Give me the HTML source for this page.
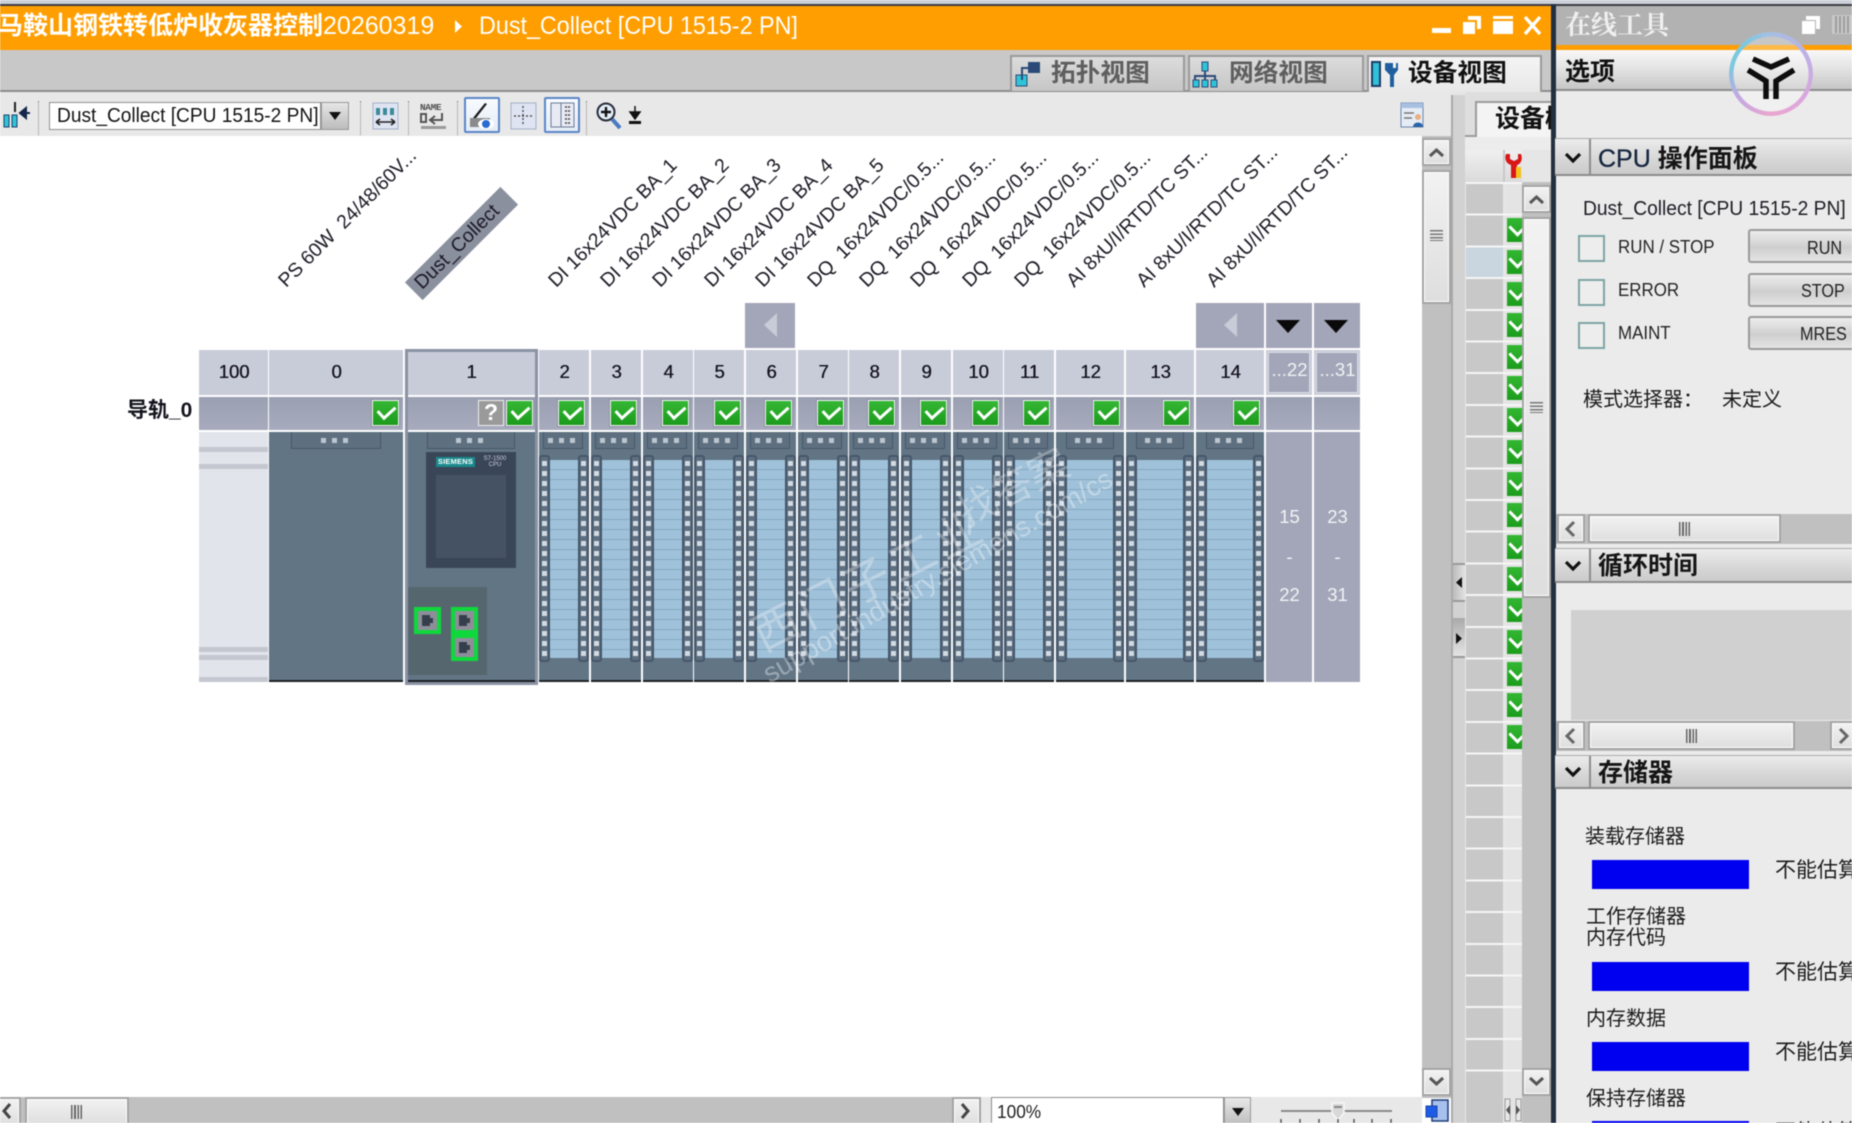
<!DOCTYPE html>
<html lang="zh"><head><meta charset="utf-8"><title>Dust_Collect</title>
<style>
*{box-sizing:border-box}
html,body{margin:0;padding:0;width:1852px;height:1123px;overflow:hidden;background:#fff}
#p{position:relative;width:1852px;height:1123px;overflow:hidden;background:#fff;filter:blur(.6px);font-family:"Liberation Sans","Noto Sans CJK SC",sans-serif;color:#111}
#p div,#p svg,#p span.a{position:absolute}
.z{white-space:pre;line-height:1}
.sx{transform-origin:0 50%;transform:scaleX(.933)}
.tb{height:36px;top:55px;background:linear-gradient(#dcdcdc,#c6c6c6);border:2px solid #9a9a9a;border-bottom:none}
.tt{font-size:24.7px;font-weight:700;top:61px;line-height:26px;white-space:pre}
.h{left:1555px;width:297px;background:linear-gradient(#ececec,#d6d6d6 60%,#cbcbcb);border-top:1px solid #aaa;border-bottom:2px solid #8c8c8c}
.h i{position:absolute;left:34px;top:0;bottom:-2px;width:2px;background:#8c8c8c}
.ht{left:1598px;font-size:25px;font-weight:700;line-height:28px;white-space:pre;color:#151515}
.sb{background:linear-gradient(#f2f2f2,#dedede);border:2px solid #a4a4a4;box-shadow:inset 0 0 0 1px #fff}
.tr{background:#c0c0c0}
.hd{top:350px;height:45px;background:#c8ccd9;text-align:center;font-size:18.5px;line-height:44px;color:#14141e;padding-left:1px;text-shadow:.4px 0 #14141e}
.ck{top:397px;height:33px;background:linear-gradient(#9b9fb2,#a7abbd)}
.c{top:400px;width:27px;height:26px;margin-left:-1px;background:linear-gradient(#35b835,#1c9a1c);border:1.5px solid #f2f4f4;box-shadow:0 0 0 1px #8c90a2}
.c::after{content:"";position:absolute;left:8px;top:1px;width:8px;height:14px;border:solid #fff;border-width:0 3.5px 3.5px 0;transform:rotate(48deg)}
.g{left:1507px;width:15px;height:24px;background:linear-gradient(#33b833,#1c9c1c);overflow:hidden}
.g::after{content:"";position:absolute;left:4px;top:3px;width:10px;height:10px;border:solid #fff;border-width:0 3.5px 3.5px 0;transform:rotate(45deg)}
.m{top:432px;height:250px;background:#627585;overflow:hidden}
.m::after{content:"";position:absolute;left:0;right:0;bottom:0;height:2px;background:#1c2024}
.t{top:-1px;height:18px;background:#5e7080;border:1px solid #46576a}
.t::before{content:"";position:absolute;left:50%;margin-left:-15px;top:6px;width:5px;height:5px;background:#bcc6d0;box-shadow:11px 0 #bcc6d0,22px 0 #bcc6d0}
.pn{top:28px;height:198px;background:repeating-linear-gradient(#9fc1d9 0 9px,#86a9c2 9px 10px);background-color:#9fc1d9}
.st{top:23px;width:11px;height:207px;border-radius:3px;border:2px solid #46576a;background:repeating-linear-gradient(#0000 0 4px,#d2dae2 4px 9px,#0000 9px 10px) center/5px 100% no-repeat #5d6f80}
.la{left:0}.ra{right:0}
.n{top:0;height:20px;line-height:20px;font-size:19.5px;white-space:pre;transform-origin:0 100%;transform:rotate(-45deg);color:#1a1a24}
.ex{width:46px;background:#a2a6b8}
.w{color:#f2f3f6;font-size:18.5px;line-height:20px;text-align:center;padding-left:1px}
.lb{font-size:18px;line-height:20px;white-space:pre;color:#232323;transform-origin:0 50%;transform:scaleX(.94)}
.cb{left:1578px;width:27px;height:27px;border:2px solid #7ea4a6;background:#ededed}
.bt{left:1748px;width:130px;height:34px;border:2px solid #999;border-radius:3px;background:linear-gradient(#ededed,#cfcfcf 55%,#e4e4e4)}
.bl{font-size:18px;line-height:22px;color:#222;white-space:pre;transform-origin:0 50%;transform:scaleX(.9)}
.tx{font-family:"WenQuanYi Zen Hei","Noto Sans CJK SC",sans-serif;font-size:20px;line-height:22px;white-space:pre;color:#1c1c1c}
.bb{left:1592px;width:157px;height:29px;background:#0000f0}
</style></head><body><div id="p">

<!-- top strip -->
<div style="left:0;top:0;width:1852px;height:4px;background:#ccd0d8"></div>
<div style="left:0;top:4px;width:1852px;height:2px;background:#3c3c44"></div>

<!-- title bar -->
<div style="left:0;top:6px;width:1552px;height:44px;background:#ff9e00"></div>
<div class="z" style="left:-2px;top:11px;line-height:30px;font-size:25px;color:#fff;font-weight:700">马鞍山钢铁转低炉收灰器控制<span style="font-weight:400">20260319</span></div>
<svg style="left:454px;top:20px" width="9" height="13"><path d="M1 0L8 6.5L1 13Z" fill="#fff"/></svg>
<div class="z sx" style="left:479px;top:11px;line-height:30px;font-size:25px;color:#fff">Dust_Collect [CPU 1515-2 PN]</div>
<svg style="left:1430px;top:14px" width="116" height="22" viewBox="0 0 116 22" fill="#fff"><rect x="2" y="14" width="19" height="5"/><path d="M38 2h13v13h-4V6h-9z"/><rect x="33" y="8" width="12" height="12"/><rect x="63" y="2" width="20" height="18"/><rect x="63" y="5" width="20" height="2" fill="#ff9e00"/><path d="M95 3L110 20M110 3L95 20" stroke="#fff" stroke-width="3.4" fill="none"/></svg>

<!-- tabs band -->
<div style="left:0;top:50px;width:1552px;height:41px;background:#c8c8c8"></div>
<div style="left:0;top:90px;width:1552px;height:2px;background:#8c8c8c"></div>
<div class="tb" style="left:1010px;width:175px"></div>
<div class="tb" style="left:1188px;width:176px"></div>
<div class="tb" style="left:1367px;width:175px;height:38px;background:linear-gradient(#f4f4f4,#e8e8e8)"></div>
<svg style="left:1014px;top:60px" width="28" height="28" viewBox="0 0 28 28"><rect x="14" y="2" width="12" height="11" fill="#2c4a78"/><rect x="2" y="15" width="11" height="11" fill="#2fc4d8" stroke="#2c4a78"/><path d="M14 8H8V20" stroke="#2c4a78" stroke-width="2" fill="none"/></svg>
<div class="tt" style="left:1051px;color:#5e5e5e">拓扑视图</div>
<svg style="left:1192px;top:60px" width="26" height="28" viewBox="0 0 26 28"><rect x="10" y="2" width="6" height="9" fill="#2fc4d8" stroke="#2c4a78"/><path d="M13 11v5M3 22v-6h20v6M13 16v6" stroke="#2c4a78" stroke-width="2" fill="none"/><rect x="1" y="20" width="6" height="7" fill="#2fc4d8" stroke="#2c4a78"/><rect x="10" y="20" width="6" height="7" fill="#2fc4d8" stroke="#2c4a78"/><rect x="19" y="20" width="6" height="7" fill="#2fc4d8" stroke="#2c4a78"/></svg>
<div class="tt" style="left:1229px;color:#5e5e5e">网络视图</div>
<svg style="left:1371px;top:60px" width="28" height="28" viewBox="0 0 28 28"><rect x="1" y="2" width="8" height="24" fill="#30c0d8" stroke="#1c3c68" stroke-width="2"/><path d="M14 3v7l5 5v12h4V15l4-5V3l-2 0v5h-3V3z" fill="#1f5fa0"/></svg>
<div class="tt" style="left:1408px;color:#111">设备视图</div>

<!-- toolbar -->
<div style="left:0;top:92px;width:1451px;height:44px;background:#e8e8e8"></div>
<svg style="left:2px;top:100px" width="30" height="30" viewBox="0 0 30 30"><path d="M13 2v10" stroke="#222" stroke-width="2"/><rect x="2" y="15" width="5" height="12" fill="#2fc4d8" stroke="#1c3c68"/><rect x="10" y="15" width="5" height="12" fill="#2fc4d8" stroke="#1c3c68"/><path d="M28 13H19M24 8l-6 5 6 5z" fill="#14264a" stroke="#14264a" stroke-width="2"/></svg>
<div style="left:38px;top:101px;width:1px;height:34px;border-left:1px dotted #888"></div>
<div style="left:49px;top:102px;width:272px;height:28px;background:#fff;border:1.5px solid #909090"></div>
<div class="z sx" style="left:57px;top:104px;font-size:20.5px;line-height:24px;color:#141414">Dust_Collect [CPU 1515-2 PN]</div>
<div style="left:321px;top:102px;width:28px;height:28px;background:linear-gradient(#e6e6e6,#bcbcbc);border:1.5px solid #999"></div>
<svg style="left:329px;top:112px" width="12" height="8"><path d="M0 0H12L6 8Z" fill="#111"/></svg>
<div style="left:360px;top:101px;height:34px;border-left:1px dotted #888"></div>
<div style="left:408px;top:101px;height:34px;border-left:1px dotted #888"></div>
<div style="left:457px;top:101px;height:34px;border-left:1px dotted #888"></div>
<div style="left:586px;top:101px;height:34px;border-left:1px dotted #888"></div>
<svg style="left:372px;top:102px" width="27" height="28" viewBox="0 0 27 28"><rect x="1" y="1" width="25" height="26" fill="#dfe4f2" stroke="#a4aec8"/><path d="M6 6v7M13 6v7M20 6v7" stroke="#3a8a9a" stroke-width="4"/><path d="M4 20H23M4 20l4-3M4 20l4 3M23 20l-4-3M23 20l-4 3" stroke="#222" stroke-width="1.6" fill="none"/></svg>
<div style="left:420px;top:102px;font:700 9.5px/11px 'Liberation Mono',monospace;color:#4e4e4e;letter-spacing:-.4px">NAME</div>
<svg style="left:420px;top:112px" width="27" height="18" viewBox="0 0 27 18"><path d="M1 2h5v8H1zM22 1v7H11M15 4l-5 4 5 4" stroke="#555" stroke-width="2" fill="none"/><rect x="1" y="14" width="25" height="3" fill="#9a9a9a"/></svg>
<div style="left:464px;top:97px;width:36px;height:36px;background:linear-gradient(#f8fbff,#e4ecf6);border:2px solid #5a86c8;border-radius:2px"></div>
<svg style="left:468px;top:100px" width="28" height="31" viewBox="0 0 28 31"><path d="M5 18L17 3l2 1L8 18z" fill="#1a1a1a"/><rect x="2" y="18" width="20" height="9" fill="#8a8a8a"/><ellipse cx="18" cy="24" rx="8" ry="5" fill="#fff"/><circle cx="18" cy="24" r="4" fill="#2a6ad0"/></svg>
<svg style="left:510px;top:102px" width="27" height="28" viewBox="0 0 27 28"><rect x="1" y="1" width="25" height="26" fill="#dfe4f2" stroke="#a4aec8"/><path d="M13 4v20M4 14h19" stroke="#333" stroke-width="1.2" stroke-dasharray="2 2"/></svg>
<div style="left:544px;top:97px;width:36px;height:36px;background:linear-gradient(#f8fbff,#e4ecf6);border:2px solid #5a86c8;border-radius:2px"></div>
<svg style="left:550px;top:102px" width="25" height="26" viewBox="0 0 25 26"><rect x="1" y="1" width="23" height="24" fill="#e8eaf4" stroke="#6a7a94"/><path d="M11 1v24" stroke="#6a7a94"/><path d="M15 5h6M15 9h6M15 13h6M15 17h6M15 21h6" stroke="#444" stroke-width="1.6" stroke-dasharray="2 1"/></svg>
<svg style="left:596px;top:102px" width="26" height="28" viewBox="0 0 26 28"><circle cx="10" cy="10" r="8.5" fill="#e4eef8" stroke="#2a2a3a" stroke-width="2"/><path d="M5 10h10M10 5v10" stroke="#111" stroke-width="2.4"/><path d="M16 17l8 9" stroke="#4a7ac0" stroke-width="4"/></svg>
<svg style="left:628px;top:106px" width="14" height="20" viewBox="0 0 14 20"><path d="M7 0v9M2 6h10L7 13z" fill="#111" stroke="#111" stroke-width="1.5"/><rect x="1" y="15" width="12" height="3" fill="#111"/></svg>
<svg style="left:1400px;top:102px" width="26" height="26" viewBox="0 0 26 26"><rect x="1" y="1" width="22" height="24" fill="#e6ecf6" stroke="#6a86b0"/><rect x="1" y="1" width="22" height="5" fill="#a8c0e0"/><path d="M4 11h10M4 16h8" stroke="#777" stroke-width="1.5"/><circle cx="18" cy="15" r="3" fill="#e8b080"/><path d="M13 25c0-6 10-6 10 0z" fill="#2a64a8"/></svg>

<!-- labels -->
<div class="n" style="left:289px;top:271px">PS 60W  24/48/60V...</div>
<div style="left:394px;top:231px;width:135px;height:25px;background:#8b909f;transform:rotate(-45deg)"></div>
<div class="n" style="left:425px;top:273px">Dust_Collect</div>
<div class="n" style="left:559px;top:271px">DI 16x24VDC BA_1</div>
<div class="n" style="left:611px;top:271px">DI 16x24VDC BA_2</div>
<div class="n" style="left:663px;top:271px">DI 16x24VDC BA_3</div>
<div class="n" style="left:715px;top:271px">DI 16x24VDC BA_4</div>
<div class="n" style="left:766px;top:271px">DI 16x24VDC BA_5</div>
<div class="n" style="left:818px;top:271px">DQ  16x24VDC/0.5...</div>
<div class="n" style="left:870px;top:271px">DQ  16x24VDC/0.5...</div>
<div class="n" style="left:921px;top:271px">DQ  16x24VDC/0.5...</div>
<div class="n" style="left:973px;top:271px">DQ  16x24VDC/0.5...</div>
<div class="n" style="left:1025px;top:271px">DQ  16x24VDC/0.5...</div>
<div class="n" style="left:1077px;top:271px">AI 8xU/I/RTD/TC ST...</div>
<div class="n" style="left:1147px;top:271px">AI 8xU/I/RTD/TC ST...</div>
<div class="n" style="left:1217px;top:271px">AI 8xU/I/RTD/TC ST...</div>

<!-- nav arrow cells -->
<div style="left:745px;top:303px;width:50px;height:45px;background:#a2a6b8"></div>
<svg style="left:764px;top:313px" width="13" height="24"><path d="M13 0V24L0 12Z" fill="#c8ccd8"/></svg>
<div style="left:1196px;top:303px;width:68px;height:45px;background:#a2a6b8"></div>
<svg style="left:1224px;top:313px" width="13" height="24"><path d="M13 0V24L0 12Z" fill="#c8ccd8"/></svg>
<div style="left:1266px;top:303px;width:46px;height:45px;background:#a2a6b8"></div>
<div style="left:1314px;top:303px;width:46px;height:45px;background:#a2a6b8"></div>
<svg style="left:1276px;top:320px" width="24" height="13"><path d="M0 0H24L12 13Z" fill="#0a0a0a"/></svg>
<svg style="left:1324px;top:320px" width="24" height="13"><path d="M0 0H24L12 13Z" fill="#0a0a0a"/></svg>

<div class="z" style="left:127px;top:399px;font-size:21px;line-height:24px;font-weight:700;color:#14141e">导轨_0</div>

<!-- slot headers -->
<div class="hd" style="left:199px;width:69px">100</div>
<div class="hd" style="left:269px;width:134px">0</div>
<div class="hd" style="left:407px;width:128px">1</div>
<div class="hd" style="left:539px;width:50px">2</div>
<div class="hd" style="left:591px;width:50px">3</div>
<div class="hd" style="left:643px;width:50px">4</div>
<div class="hd" style="left:694px;width:50px">5</div>
<div class="hd" style="left:746px;width:50px">6</div>
<div class="hd" style="left:798px;width:50px">7</div>
<div class="hd" style="left:849px;width:50px">8</div>
<div class="hd" style="left:901px;width:50px">9</div>
<div class="hd" style="left:953px;width:50px">10</div>
<div class="hd" style="left:1004px;width:50px">11</div>
<div class="hd" style="left:1056px;width:68px">12</div>
<div class="hd" style="left:1126px;width:68px">13</div>
<div class="hd" style="left:1196px;width:68px">14</div>
<div style="left:1266px;top:350px;width:46px;height:45px;background:#c8ccd9"></div>
<div style="left:1268px;top:352px;width:42px;height:41px;background:#a2a6b8;border:1px solid #d8dae2"></div>
<div class="w" style="left:1268px;top:360px;width:42px">...22</div>
<div style="left:1314px;top:350px;width:46px;height:45px;background:#c8ccd9"></div>
<div style="left:1316px;top:352px;width:42px;height:41px;background:#a2a6b8;border:1px solid #d8dae2"></div>
<div class="w" style="left:1316px;top:360px;width:42px">...31</div>

<!-- check row -->
<div class="ck" style="left:199px;width:69px"></div>
<div class="ck" style="left:269px;width:134px"></div>
<div class="ck" style="left:407px;width:128px"></div>
<div class="ck" style="left:539px;width:50px"></div>
<div class="ck" style="left:591px;width:50px"></div>
<div class="ck" style="left:643px;width:50px"></div>
<div class="ck" style="left:694px;width:50px"></div>
<div class="ck" style="left:746px;width:50px"></div>
<div class="ck" style="left:798px;width:50px"></div>
<div class="ck" style="left:849px;width:50px"></div>
<div class="ck" style="left:901px;width:50px"></div>
<div class="ck" style="left:953px;width:50px"></div>
<div class="ck" style="left:1004px;width:50px"></div>
<div class="ck" style="left:1056px;width:68px"></div>
<div class="ck" style="left:1126px;width:68px"></div>
<div class="ck" style="left:1196px;width:68px"></div>
<div class="ck" style="left:1266px;width:46px"></div>
<div class="ck" style="left:1314px;width:46px"></div>
<div class="c" style="left:373px"></div>
<div style="left:478px;top:400px;width:26px;height:26px;background:#9a9a9a;border:1.5px solid #eee;color:#fff;font:700 23px/23px 'Liberation Sans',sans-serif;text-align:center">?</div>
<div class="c" style="left:507px"></div>
<div class="c" style="left:559px"></div>
<div class="c" style="left:611px"></div>
<div class="c" style="left:663px"></div>
<div class="c" style="left:715px"></div>
<div class="c" style="left:766px"></div>
<div class="c" style="left:818px"></div>
<div class="c" style="left:869px"></div>
<div class="c" style="left:921px"></div>
<div class="c" style="left:973px"></div>
<div class="c" style="left:1024px"></div>
<div class="c" style="left:1094px"></div>
<div class="c" style="left:1164px"></div>
<div class="c" style="left:1234px"></div>

<!-- rail: slot 100 -->
<div style="left:199px;top:432px;width:69px;height:250px;background:#e2e4ec"></div>
<div style="left:199px;top:447px;width:69px;height:5px;background:#c4c6d0"></div>
<div style="left:199px;top:464px;width:69px;height:5px;background:#c4c6d0"></div>
<div style="left:199px;top:647px;width:69px;height:5px;background:#c4c6d0"></div>
<div style="left:199px;top:655px;width:69px;height:5px;background:#c4c6d0"></div>
<div style="left:199px;top:677px;width:69px;height:5px;background:#c4c6d0"></div>

<!-- slot 0 -->
<div class="m" style="left:269px;width:134px"><div class="t" style="left:22px;width:90px"></div></div>

<!-- slot 1 CPU -->
<div class="m" style="left:407px;width:128px">
 <div class="t" style="left:20px;width:88px"></div>
 <div style="left:19px;top:20px;width:90px;height:116px;background:#394658"></div>
 <div style="left:29px;top:43px;width:70px;height:83px;background:#445264"></div>
 <div style="left:29px;top:25px;width:39px;height:10px;background:#1a8a8c;color:#fff;font:700 7.5px/10px 'Liberation Sans',sans-serif;text-align:center;letter-spacing:.2px">SIEMENS</div>
 <div style="left:76px;top:24px;width:24px;color:#ccd;font:6px/6px 'Liberation Sans',sans-serif;text-align:center">S7-1500<br>CPU</div>
 <div style="left:1px;top:155px;width:79px;height:88px;background:#56666f"></div>
 <div style="left:7px;top:175px;width:27px;height:27px;background:#0fd83c"></div>
 <div style="left:44px;top:175px;width:27px;height:54px;background:#0fd83c"></div>
 <svg style="left:7px;top:175px" width="64" height="54" viewBox="0 0 64 54"><rect x="4" y="4" width="19" height="19" fill="#8e8e9a"/><rect x="41" y="4" width="19" height="19" fill="#8e8e9a"/><rect x="41" y="31" width="19" height="19" fill="#8e8e9a"/><path d="M8 8h8v3h3v5h-3v3H8zM45 8h8v3h3v5h-3v3h-8zM45 35h8v3h3v5h-3v3h-8z" fill="#353f4c"/></svg>
</div>

<!-- IO modules -->
<div class="m" style="left:539px;width:50px"><div class="t" style="left:4px;right:6px"></div><div class="pn" style="left:11px;right:11px"></div><div class="st la"></div><div class="st ra"></div></div>
<div class="m" style="left:591px;width:50px"><div class="t" style="left:4px;right:6px"></div><div class="pn" style="left:11px;right:11px"></div><div class="st la"></div><div class="st ra"></div></div>
<div class="m" style="left:643px;width:50px"><div class="t" style="left:4px;right:6px"></div><div class="pn" style="left:11px;right:11px"></div><div class="st la"></div><div class="st ra"></div></div>
<div class="m" style="left:694px;width:50px"><div class="t" style="left:4px;right:6px"></div><div class="pn" style="left:11px;right:11px"></div><div class="st la"></div><div class="st ra"></div></div>
<div class="m" style="left:746px;width:50px"><div class="t" style="left:4px;right:6px"></div><div class="pn" style="left:11px;right:11px"></div><div class="st la"></div><div class="st ra"></div></div>
<div class="m" style="left:798px;width:50px"><div class="t" style="left:4px;right:6px"></div><div class="pn" style="left:11px;right:11px"></div><div class="st la"></div><div class="st ra"></div></div>
<div class="m" style="left:849px;width:50px"><div class="t" style="left:4px;right:6px"></div><div class="pn" style="left:11px;right:11px"></div><div class="st la"></div><div class="st ra"></div></div>
<div class="m" style="left:901px;width:50px"><div class="t" style="left:4px;right:6px"></div><div class="pn" style="left:11px;right:11px"></div><div class="st la"></div><div class="st ra"></div></div>
<div class="m" style="left:953px;width:50px"><div class="t" style="left:4px;right:6px"></div><div class="pn" style="left:11px;right:11px"></div><div class="st la"></div><div class="st ra"></div></div>
<div class="m" style="left:1004px;width:50px"><div class="t" style="left:4px;right:6px"></div><div class="pn" style="left:11px;right:11px"></div><div class="st la"></div><div class="st ra"></div></div>
<div class="m" style="left:1056px;width:68px"><div class="t" style="left:10px;right:10px"></div><div class="pn" style="left:11px;right:11px"></div><div class="st la"></div><div class="st ra"></div></div>
<div class="m" style="left:1126px;width:68px"><div class="t" style="left:10px;right:10px"></div><div class="pn" style="left:11px;right:11px"></div><div class="st la"></div><div class="st ra"></div></div>
<div class="m" style="left:1196px;width:68px"><div class="t" style="left:10px;right:10px"></div><div class="pn" style="left:11px;right:11px"></div><div class="st la"></div><div class="st ra"></div></div>

<!-- extended -->
<div class="ex" style="left:1266px;top:432px;height:250px"></div>
<div class="ex" style="left:1314px;top:432px;height:250px"></div>
<div class="w" style="left:1266px;top:507px;width:46px">15</div>
<div class="w" style="left:1266px;top:547px;width:46px">-</div>
<div class="w" style="left:1266px;top:585px;width:46px">22</div>
<div class="w" style="left:1314px;top:507px;width:46px">23</div>
<div class="w" style="left:1314px;top:547px;width:46px">-</div>
<div class="w" style="left:1314px;top:585px;width:46px">31</div>

<!-- selection frame -->
<div style="left:405px;top:349px;width:133px;height:336px;border:3px solid #8a92a4"></div>

<!-- watermark -->
<div class="z" style="left:765px;top:610px;font-size:46px;letter-spacing:5px;color:rgba(255,255,255,.3);transform-origin:0 100%;transform:rotate(-27deg);font-family:'Noto Sans CJK SC',sans-serif;font-weight:400">西门子工业</div>
<div class="z" style="left:967px;top:490px;font-size:40px;color:rgba(255,255,255,.3);transform-origin:0 100%;transform:rotate(-27deg);font-family:'Noto Sans CJK SC',sans-serif;font-weight:400">找答案</div>
<div class="z" style="left:772px;top:660px;font-size:27.5px;color:rgba(255,255,255,.36);transform-origin:0 100%;transform:rotate(-30deg)">support.industry.siemens.com/cs</div>

<!-- main v scrollbar -->
<div class="tr" style="left:1422px;top:136px;width:29px;height:962px"></div>
<div class="sb" style="left:1422px;top:138px;width:29px;height:28px"></div>
<svg style="left:1428px;top:147px" width="17" height="11"><path d="M2 9L8.500 3L15 9" stroke="#555" stroke-width="3" fill="none"/></svg>
<div class="sb" style="left:1422px;top:170px;width:29px;height:134px"></div>
<div style="left:1430px;top:230px;width:13px;height:11px;background:repeating-linear-gradient(#777 0 1.5px,#0000 1.5px 3.4px)"></div>
<div class="sb" style="left:1422px;top:1068px;width:29px;height:28px"></div>
<svg style="left:1428px;top:1076px" width="17" height="11"><path d="M2 2L8.500 8L15 2" stroke="#555" stroke-width="3" fill="none"/></svg>

<!-- device overview column -->
<div style="left:1451px;top:92px;width:101px;height:1031px;background:#e6e6e6"></div>
<div style="left:1451px;top:95px;width:14px;height:1028px;background:#d2d2d2;border-left:2px solid #aaa"></div>
<div style="left:1465px;top:92px;width:87px;height:45px;background:#dedede"></div>
<div style="left:1475px;top:101px;width:77px;height:36px;background:#f4f4f4;border:2px solid #9c9c9c;border-right:none;border-bottom:none;overflow:hidden">
 <div class="z" style="left:18px;top:2px;font-size:25px;line-height:28px;font-weight:700;color:#111">设备概览</div>
</div>
<div style="left:1465px;top:135px;width:10px;height:2px;background:#9c9c9c"></div>
<div style="left:1465px;top:137px;width:87px;height:13px;background:#ececec"></div>
<div style="left:1465px;top:150px;width:57px;height:32px;background:linear-gradient(#f0f0f0,#dadada)"></div>
<div style="left:1503px;top:150px;width:2px;height:32px;background:#c8c8c8"></div>
<svg style="left:1505px;top:153px" width="17" height="26" viewBox="0 0 17 26"><path d="M1 1c-2 6 1 10 5 11v13h6V12c4-1 6-6 4-11l-3 0v5l-4 2-4-2V1z" fill="#d81818"/><rect x="11" y="14" width="5" height="11" fill="#f2c418"/></svg>
<div style="left:1466px;top:182px;width:37px;height:941px;background:#c8c8c8"></div>
<div style="left:1466px;top:246px;width:37px;height:31px;background:#c9d5df"></div>
<div style="left:1505px;top:182px;width:17px;height:941px;background:#e4e4e4"></div>
<div style="left:1466px;top:182px;width:56px;height:916px;background:repeating-linear-gradient(#f6f6f6 0 2px,#0000 2px 31.7px)"></div>

<div class="g" style="top:218px"></div><div class="g" style="top:250px"></div><div class="g" style="top:282px"></div><div class="g" style="top:313px"></div><div class="g" style="top:345px"></div><div class="g" style="top:376px"></div><div class="g" style="top:408px"></div><div class="g" style="top:440px"></div><div class="g" style="top:472px"></div><div class="g" style="top:503px"></div><div class="g" style="top:535px"></div><div class="g" style="top:567px"></div><div class="g" style="top:598px"></div><div class="g" style="top:630px"></div><div class="g" style="top:662px"></div><div class="g" style="top:693px"></div><div class="g" style="top:725px"></div>

<div class="tr" style="left:1522px;top:182px;width:30px;height:941px"></div>
<div class="sb" style="left:1522px;top:185px;width:29px;height:28px"></div>
<svg style="left:1528px;top:194px" width="17" height="11"><path d="M2 9L8.500 3L15 9" stroke="#555" stroke-width="3" fill="none"/></svg>
<div class="sb" style="left:1522px;top:217px;width:29px;height:381px"></div>
<div style="left:1530px;top:402px;width:13px;height:11px;background:repeating-linear-gradient(#777 0 1.5px,#0000 1.5px 3.4px)"></div>
<div class="sb" style="left:1522px;top:1068px;width:29px;height:28px"></div>
<svg style="left:1528px;top:1076px" width="17" height="11"><path d="M2 2L8.500 8L15 2" stroke="#555" stroke-width="3" fill="none"/></svg>

<!-- collapse arrows -->
<div style="left:1453px;top:563px;width:12px;height:39px;background:linear-gradient(90deg,#bbb,#e2e2e2);border-top:2px solid #999;border-bottom:2px solid #999"></div>
<svg style="left:1456px;top:577px" width="6" height="11"><path d="M6 0V11L0 5.500Z" fill="#111"/></svg>
<div style="left:1453px;top:618px;width:12px;height:40px;background:linear-gradient(#aaa,#e4e4e4);border-bottom:2px solid #999"></div>
<svg style="left:1456px;top:633px" width="6" height="11"><path d="M0 0V11L6 5.500Z" fill="#111"/></svg>

<!-- bottom bar -->
<div style="left:0;top:1097px;width:1422px;height:26px;background:#c0c0c0"></div>
<div class="sb" style="left:-8px;top:1097px;width:29px;height:30px"></div>
<svg style="left:1px;top:1102px" width="11" height="18"><path d="M9 2L3 9L9 16" stroke="#444" stroke-width="3" fill="none"/></svg>
<div class="sb" style="left:25px;top:1097px;width:104px;height:30px"></div>
<div style="left:71px;top:1105px;width:12px;height:14px;background:repeating-linear-gradient(90deg,#666 0 1.6px,#0000 1.6px 3.2px)"></div>
<div class="sb" style="left:952px;top:1097px;width:29px;height:30px"></div>
<svg style="left:960px;top:1102px" width="11" height="18"><path d="M2 2L8 9L2 16" stroke="#444" stroke-width="3" fill="none"/></svg>
<div style="left:981px;top:1097px;width:441px;height:26px;background:#e8e8e8"></div>
<div style="left:991px;top:1097px;width:233px;height:30px;background:#fff;border:1.5px solid #8c8c8c"></div>
<div class="z sx" style="left:997px;top:1101px;font-size:18.5px;line-height:22px;color:#222">100%</div>
<div style="left:1224px;top:1097px;width:27px;height:30px;background:linear-gradient(#e8e8e8,#bcbcbc);border:1.5px solid #999"></div>
<svg style="left:1232px;top:1108px" width="12" height="8"><path d="M0 0H12L6 8Z" fill="#111"/></svg>
<div style="left:1281px;top:1110px;width:111px;height:2px;background:#8a8a8a"></div>
<svg style="left:1331px;top:1102px" width="14" height="19"><path d="M1 1H13V11L7 18L1 11Z" fill="#d8d8d8" stroke="#f8f8f8" stroke-width="1.5"/><path d="M3 5H11" stroke="#888" stroke-width="2"/></svg>
<svg style="left:1280px;top:1119px" width="114" height="4"><path d="M1 0v4M20 0v4M39 0v4M58 0v4M74 0v4M92 0v4M111 0v4" stroke="#555" stroke-width="1.5"/></svg>
<svg style="left:1425px;top:1099px" width="24" height="23" viewBox="0 0 24 23"><rect x="7" y="1" width="16" height="21" fill="#a8c0ec" stroke="#1c3c78" stroke-width="1.5"/><rect x="1" y="7" width="11" height="11" fill="#1e5ce8" stroke="#1844a8"/></svg>
<svg style="left:1504px;top:1098px" width="18" height="25" viewBox="0 0 18 25"><path d="M1 1h5v22H1zM12 1h5v22h-5z" fill="#e8e8e8" stroke="#999"/><path d="M6 7l-4 5 4 5zM12 7l4 5-4 5z" fill="#555"/></svg>

<!-- separator -->
<div style="left:1551px;top:4px;width:5px;height:1119px;background:#22303f"></div>

<!-- right panel -->
<div style="left:1556px;top:6px;width:296px;height:1117px;background:#ebebeb"></div>
<div style="left:1556px;top:6px;width:296px;height:39px;background:#b2b2b2"></div>
<div style="left:1556px;top:45px;width:296px;height:5px;background:#ff9e00"></div>
<div class="z" style="left:1565px;top:9px;font-size:26px;line-height:30px;color:#f0f0f0;font-weight:700;font-family:'Noto Serif CJK SC','Noto Sans CJK SC',serif">在线工具</div>
<svg style="left:1801px;top:15px" width="20" height="20" viewBox="0 0 20 20" fill="#fff"><path d="M5 1h14v13h-4V5H5z"/><rect x="1" y="6" width="13" height="13"/></svg>
<div style="left:1832px;top:15px;width:20px;height:19px;background:repeating-linear-gradient(90deg,#c8c8c8 0 2px,#9e9e9e 2px 4px);border:1px solid #c8c8c8"></div>
<div style="left:1556px;top:50px;width:296px;height:41px;background:linear-gradient(#f8f8f8,#e2e2e2 50%,#c6c6c6);border-bottom:2px solid #8c8c8c"></div>
<div class="z" style="left:1565px;top:57px;font-size:25px;line-height:30px;font-weight:700;color:#111">选项</div>

<div class="h" style="top:138px;height:38px"><i></i></div>
<svg style="left:1564px;top:152px" width="18" height="12"><path d="M2 2L9 9L16 2" stroke="#111" stroke-width="3.2" fill="none"/></svg>
<div class="ht" style="top:145px"><span style="color:#16263f;font-weight:400;-webkit-text-stroke:.3px #16263f">CPU</span> 操作面板</div>

<div class="z sx" style="left:1583px;top:198px;font-size:20.6px;line-height:22px;color:#1c1c24">Dust_Collect [CPU 1515-2 PN]</div>
<div class="cb" style="top:235px"></div>
<div class="cb" style="top:279px"></div>
<div class="cb" style="top:322px"></div>
<div class="lb" style="left:1618px;top:237px">RUN / STOP</div>
<div class="lb" style="left:1618px;top:280px">ERROR</div>
<div class="lb" style="left:1618px;top:323px">MAINT</div>
<div class="bt" style="top:229px"></div>
<div class="bt" style="top:273px"></div>
<div class="bt" style="top:316px"></div>
<div class="bl" style="left:1807px;top:237px">RUN</div>
<div class="bl" style="left:1801px;top:280px">STOP</div>
<div class="bl" style="left:1800px;top:323px">MRES</div>
<div class="tx" style="left:1583px;top:387px">模式选择器：</div>
<div class="tx" style="left:1722px;top:387px">未定义</div>

<div class="tr" style="left:1556px;top:514px;width:296px;height:30px"></div>
<div class="sb" style="left:1557px;top:514px;width:28px;height:29px"></div>
<svg style="left:1564px;top:520px" width="13" height="18"><path d="M10 2L3 9L10 16" stroke="#666" stroke-width="3" fill="none"/></svg>
<div class="sb" style="left:1588px;top:514px;width:193px;height:29px"></div>
<div style="left:1679px;top:522px;width:12px;height:14px;background:repeating-linear-gradient(90deg,#666 0 1.6px,#0000 1.6px 3.2px)"></div>

<div class="h" style="top:548px;height:35px"><i></i></div>
<svg style="left:1564px;top:560px" width="18" height="12"><path d="M2 2L9 9L16 2" stroke="#111" stroke-width="3.2" fill="none"/></svg>
<div class="ht" style="top:552px">循环时间</div>
<div style="left:1571px;top:610px;width:281px;height:110px;background:#d0d0d0"></div>

<div class="tr" style="left:1556px;top:721px;width:296px;height:30px"></div>
<div class="sb" style="left:1557px;top:721px;width:28px;height:29px"></div>
<svg style="left:1564px;top:727px" width="13" height="18"><path d="M10 2L3 9L10 16" stroke="#666" stroke-width="3" fill="none"/></svg>
<div class="sb" style="left:1588px;top:721px;width:207px;height:29px"></div>
<div style="left:1686px;top:729px;width:12px;height:14px;background:repeating-linear-gradient(90deg,#666 0 1.6px,#0000 1.6px 3.2px)"></div>
<div class="sb" style="left:1830px;top:721px;width:29px;height:29px"></div>
<svg style="left:1837px;top:727px" width="13" height="18"><path d="M3 2L10 9L3 16" stroke="#666" stroke-width="3" fill="none"/></svg>

<div class="h" style="top:755px;height:34px"><i></i></div>
<svg style="left:1564px;top:766px" width="18" height="12"><path d="M2 2L9 9L16 2" stroke="#111" stroke-width="3.2" fill="none"/></svg>
<div class="ht" style="top:759px">存储器</div>

<div class="tx" style="left:1585px;top:824px">装载存储器</div>
<div class="bb" style="top:860px"></div>
<div class="tx" style="left:1775px;top:858px;font-size:21px">不能估算</div>
<div class="tx" style="left:1586px;top:904px">工作存储器</div>
<div class="tx" style="left:1586px;top:925px">内存代码</div>
<div class="bb" style="top:962px"></div>
<div class="tx" style="left:1775px;top:960px;font-size:21px">不能估算</div>
<div class="tx" style="left:1586px;top:1006px">内存数据</div>
<div class="bb" style="top:1042px"></div>
<div class="tx" style="left:1775px;top:1040px;font-size:21px">不能估算</div>
<div class="tx" style="left:1586px;top:1086px">保持存储器</div>
<div class="bb" style="top:1121px"></div>
<div class="tx" style="left:1775px;top:1120px;font-size:21px">不能估算</div>

<!-- logo -->
<div style="left:1729px;top:32px;width:84px;height:84px;border-radius:50%;background:rgba(255,255,255,.28)"></div>
<div style="left:1729px;top:32px;width:84px;height:84px;border-radius:50%;background:conic-gradient(from 0deg,#a4bfe6,#c0aee4 70deg,#dca6dc 130deg,#eaa6cf 180deg,#c2a8e2 235deg,#7cc8de 280deg,#7cc8de 320deg,#a4bfe6);-webkit-mask:radial-gradient(circle,transparent 37px,#000 38px);mask:radial-gradient(circle,transparent 37px,#000 38px)"></div>
<svg style="left:1741px;top:45px" width="60" height="60" viewBox="-30 -30 60 60"><path d="M-18-16L0-8L18-16M-23-5L-5 6V24M23-5L5 6V24" stroke="#0d0d0d" stroke-width="5.500" fill="none"/></svg>

</div></body></html>
